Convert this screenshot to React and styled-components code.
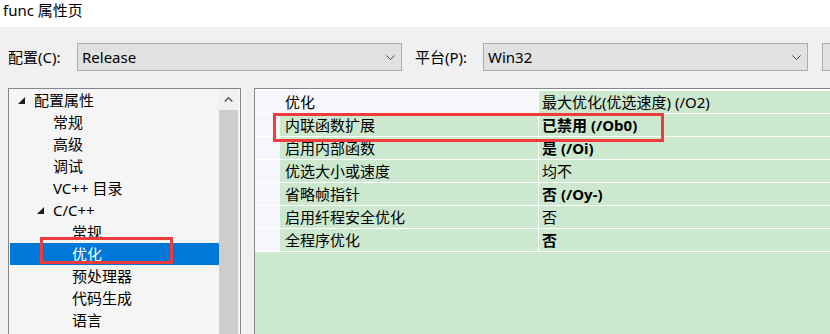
import React from 'react';
import styled, { createGlobalStyle } from 'styled-components';

const GlobalStyle = createGlobalStyle`
  body {
    margin: 0;
    background: #f0f0f0;
    font-family: "Noto Sans", "Noto Sans CJK SC", sans-serif;
    font-size: 15px;
    color: #000;
  }
`;

const Window = styled.div`
  width: 830px;
  height: 334px;
  overflow: hidden;
  display: flex;
  flex-direction: column;
  background: #f0f0f0;
`;
const TitleBar = styled.div`
  flex: none;
  height: 27px;
  box-sizing: border-box;
  padding-left: 3px;
  background: #fff;
  line-height: 20px;
  white-space: nowrap;
`;
const ConfigBar = styled.div`
  flex: none;
  display: flex;
  align-items: center;
  padding: 16px 0 17px 8px;
  white-space: nowrap;
`;
const Label = styled.span`
  flex: none;
  width: ${p => p.$w}px;
  line-height: 28px;
`;
const Select = styled.div`
  flex: none;
  width: 325px;
  height: 28px;
  box-sizing: border-box;
  display: flex;
  align-items: center;
  justify-content: space-between;
  padding: 0 6px 0 4px;
  margin-right: ${p => p.$gap}px;
  border: 1px solid #adadad;
  background: #e1e1e1;
  svg {
    width: 9px;
    height: 5px;
  }
`;
const StubButton = styled.div`
  flex: none;
  width: 60px;
  height: 28px;
  box-sizing: border-box;
  border: 1px solid #adadad;
  background: #e1e1e1;
`;
const Main = styled.div`
  flex: 1;
  min-height: 0;
  display: flex;
  gap: 13px;
  padding-left: 8px;
`;
const Tree = styled.div`
  position: relative;
  flex: none;
  width: 233px;
  box-sizing: border-box;
  display: flex;
  padding: 0 2px 0 1px;
  border: 1px solid #828790;
  border-bottom: none;
  background: #f5f5f5;
`;
const TreeList = styled.div`
  flex: 1;
  min-width: 0;
`;
const TreeRow = styled.div`
  display: flex;
  align-items: center;
  height: 22px;
  line-height: 22px;
  padding-left: ${p => 8 + p.$level * 19}px;
  background: ${p => (p.$selected ? '#0078d7' : 'transparent')};
  color: ${p => (p.$selected ? '#fff' : '#000')};
  white-space: nowrap;
`;
const Toggle = styled.span`
  flex: none;
  width: 16px;
  display: flex;
  align-items: center;
  svg {
    width: 7px;
    height: 7px;
    margin-top: 1px;
  }
`;
const ScrollBar = styled.div`
  flex: none;
  width: 19px;
  display: flex;
  flex-direction: column;
  background: #f0f0f0;
`;
const ScrollArrow = styled.div`
  flex: none;
  height: 21px;
  display: flex;
  align-items: center;
  justify-content: center;
  svg {
    width: 9px;
    height: 5px;
  }
`;
const ScrollThumb = styled.div`
  flex: 1;
  background: #cdcdcd;
`;
const Panel = styled.div`
  position: relative;
  flex: 1;
  min-width: 0;
  border-top: 1px solid #828790;
  border-left: 1px solid #828790;
  background: #cce8cf;
`;
const Grid = styled.div`
  display: grid;
  grid-template-columns: 25px 258px 1fr;
  grid-auto-rows: 22px;
  row-gap: 1px;
  padding: 2px 0 1px;
  background: #fff;
  line-height: 22px;
  white-space: nowrap;
`;
const MarginCell = styled.div`
  background: #f5f7fb;
`;
const NameCell = styled.div`
  padding-left: 5px;
  background: ${p => (p.$active ? '#f5f7fb' : '#cce8cf')};
`;
const ValueCell = styled.div`
  padding-left: 3px;
  border-left: 1px solid #fff;
  background: #cce8cf;
  font-weight: ${p => (p.$bold ? 700 : 400)};
`;
const Highlight = styled.div`
  position: absolute;
  left: ${p => p.$left}px;
  top: ${p => p.$top}px;
  width: ${p => p.$w}px;
  height: ${p => p.$h}px;
  box-sizing: border-box;
  border: 3px solid #ef3b3b;
  pointer-events: none;
`;

const Chevron = ({ up }) => (
  <svg viewBox="0 0 9 5">
    <polyline
      points={up ? '0.7,4.5 4.5,0.8 8.3,4.5' : '0.5,0.5 4.5,4.5 8.5,0.5'}
      fill="none"
      stroke={up ? '#606060' : '#444'}
      strokeWidth={up ? 1.6 : 1}
    />
  </svg>
);

const Expanded = () => (
  <svg viewBox="0 0 7 7">
    <polygon points="7,0 7,7 0,7" fill="#1e1e1e" />
  </svg>
);

const treeItems = [
  { label: '配置属性', level: 0, open: true },
  { label: '常规', level: 1 },
  { label: '高级', level: 1 },
  { label: '调试', level: 1 },
  { label: 'VC++ 目录', level: 1 },
  { label: 'C/C++', level: 1, open: true },
  { label: '常规', level: 2 },
  { label: '优化', level: 2, selected: true },
  { label: '预处理器', level: 2 },
  { label: '代码生成', level: 2 },
  { label: '语言', level: 2 },
];

const props = [
  { name: '优化', value: '最大优化(优选速度) (/O2)', active: true },
  { name: '内联函数扩展', value: '已禁用 (/Ob0)', bold: true },
  { name: '启用内部函数', value: '是 (/Oi)', bold: true },
  { name: '优选大小或速度', value: '均不' },
  { name: '省略帧指针', value: '否 (/Oy-)', bold: true },
  { name: '启用纤程安全优化', value: '否' },
  { name: '全程序优化', value: '否', bold: true },
];

export default function App() {
  return (
    <Window>
      <GlobalStyle />
      <TitleBar>func 属性页</TitleBar>
      <ConfigBar>
        <Label $w={69}>配置(C):</Label>
        <Select $gap={13}>
          Release
          <Chevron />
        </Select>
        <Label $w={68}>平台(P):</Label>
        <Select $gap={14}>
          Win32
          <Chevron />
        </Select>
        <StubButton />
      </ConfigBar>
      <Main>
        <Tree>
          <TreeList>
            {treeItems.map((item, i) => (
              <TreeRow key={i} $level={item.level} $selected={item.selected}>
                <Toggle>{item.open && <Expanded />}</Toggle>
                {item.label}
              </TreeRow>
            ))}
          </TreeList>
          <ScrollBar>
            <ScrollArrow>
              <Chevron up />
            </ScrollArrow>
            <ScrollThumb />
          </ScrollBar>
          <Highlight $left={31} $top={148} $w={133} $h={27} />
        </Tree>
        <Panel>
          <Grid>
            {props.map((p, i) => (
              <React.Fragment key={i}>
                <MarginCell />
                <NameCell $active={p.active}>{p.name}</NameCell>
                <ValueCell $bold={p.bold}>{p.value}</ValueCell>
              </React.Fragment>
            ))}
          </Grid>
          <Highlight $left={18} $top={24} $w={391} $h={29} />
        </Panel>
      </Main>
    </Window>
  );
}
